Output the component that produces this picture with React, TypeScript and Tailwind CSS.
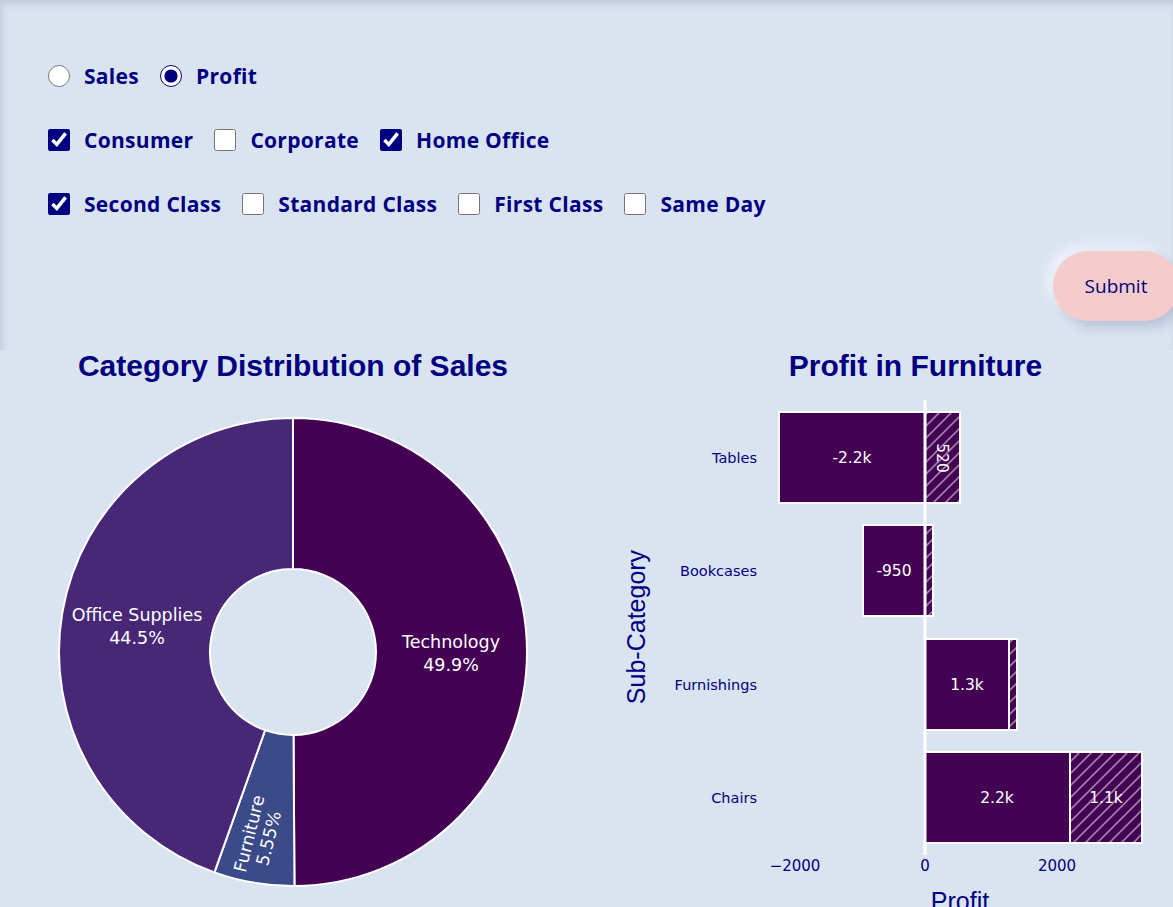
import React from 'react';

const NAVY = '#000080';

type Opt = { label: string; checked: boolean };

const segments: Opt[] = [
  { label: 'Consumer', checked: true },
  { label: 'Corporate', checked: false },
  { label: 'Home Office', checked: true },
];

const shipModes: Opt[] = [
  { label: 'Second Class', checked: true },
  { label: 'Standard Class', checked: false },
  { label: 'First Class', checked: false },
  { label: 'Same Day', checked: false },
];

function CheckRow({ items }: { items: Opt[] }) {
  return (
    <div className="flex items-center gap-[21px]">
      {items.map((it) => (
        <label key={it.label} className="flex items-center gap-[14px]">
          <input type="checkbox" defaultChecked={it.checked} className="m-0 w-[22px] h-[22px] accent-[#000080]" />
          <span>{it.label}</span>
        </label>
      ))}
    </div>
  );
}

// pie helpers: angle measured clockwise from 12 o'clock, in degrees
const pt = (cx: number, cy: number, r: number, a: number) => {
  const rad = (a * Math.PI) / 180;
  return [cx + r * Math.sin(rad), cy - r * Math.cos(rad)];
};

function slice(cx: number, cy: number, ro: number, ri: number, a0: number, a1: number) {
  const large = a1 - a0 > 180 ? 1 : 0;
  const [x0, y0] = pt(cx, cy, ro, a0);
  const [x1, y1] = pt(cx, cy, ro, a1);
  const [x2, y2] = pt(cx, cy, ri, a1);
  const [x3, y3] = pt(cx, cy, ri, a0);
  return `M${x0},${y0} A${ro},${ro} 0 ${large} 1 ${x1},${y1} L${x2},${y2} A${ri},${ri} 0 ${large} 0 ${x3},${y3} Z`;
}

function PieChart() {
  const cx = 293;
  const cy = 270;
  const tech = 0.499 * 360;
  const furn = tech + 0.0555 * 360;
  return (
    <svg width="586" height="525" className="block" style={{ fontFamily: '"DejaVu Sans", Verdana, sans-serif' }}>
      <path d={slice(cx, cy, 234, 83, 0, tech)} fill="#440154" stroke="#fff" strokeWidth="2" />
      <path d={slice(cx, cy, 234, 83, tech, furn)} fill="#3b4a88" stroke="#fff" strokeWidth="2" />
      <path d={slice(cx, cy, 234, 83, furn, 360)} fill="#482777" stroke="#fff" strokeWidth="2" />
      <g fill="#fff" fontSize="17.5" textAnchor="middle">
        <text x="137" y="239">Office Supplies</text>
        <text x="137" y="262">44.5%</text>
        <text x="451" y="266">Technology</text>
        <text x="451" y="289">49.9%</text>
        <g transform="translate(259 454) rotate(-76)">
          <text x="0" y="-4">Furniture</text>
          <text x="0" y="16">5.55%</text>
        </g>
      </g>
    </svg>
  );
}

const bars = [
  { name: 'Tables', y: 30, x0: 193, x1: 339, h1: 374, label: '-2.2k', lx: 266 },
  { name: 'Bookcases', y: 143, x0: 277, x1: 339, h1: 347, label: '-950', lx: 308 },
  { name: 'Furnishings', y: 257, x0: 339, x1: 423, h1: 431, label: '1.3k', lx: 381 },
  { name: 'Chairs', y: 370, x0: 339, x1: 484, h1: 556, label: '2.2k', lx: 411 },
];

function BarChart() {
  return (
    <svg width="587" height="525" className="block overflow-visible" style={{ fontFamily: '"DejaVu Sans", Verdana, sans-serif' }}>
      <defs>
        <pattern id="hatch" patternUnits="userSpaceOnUse" width="12" height="12">
          <rect width="12" height="12" fill="#440154" />
          <path d="M0,12 L12,0 M-3,3 L3,-3 M9,15 L15,9" stroke="rgba(255,255,255,0.5)" strokeWidth="1.6" />
        </pattern>
      </defs>
      {bars.map((b) => {
        const neg = b.x0 < 339;
        const hx = neg ? 339 : b.x1;
        return (
          <g key={b.name}>
            <rect x={b.x0} y={b.y} width={b.x1 - b.x0} height="91" fill="#440154" stroke="#fff" strokeWidth="2" />
            <rect x={hx} y={b.y} width={b.h1 - hx} height="91" fill="url(#hatch)" stroke="#fff" strokeWidth="2" />
            <text x={b.lx} y={b.y + 51} fill="#fff" fontSize="15.5" textAnchor="middle">{b.label}</text>
            <text x="171" y={b.y + 51} fill={NAVY} fontSize="14.5" textAnchor="end">{b.name}</text>
          </g>
        );
      })}
      <text transform="translate(351 76) rotate(90)" fill="#fff" fontSize="15.5" textAnchor="middle">520</text>
      <text x="520" y="421" fill="#fff" fontSize="15.5" textAnchor="middle">1.1k</text>
      <line x1="339" y1="18" x2="339" y2="473" stroke="#fff" strokeWidth="3" />
      <g fill={NAVY} fontSize="15" textAnchor="middle">
        <text x="209" y="489">−2000</text>
        <text x="339" y="489">0</text>
        <text x="471" y="489">2000</text>
      </g>
      <g fill={NAVY} fontSize="25" textAnchor="middle" style={{ fontFamily: '"Liberation Sans", Arial, sans-serif' }}>
        <text transform="translate(59 245) rotate(-90)">Sub-Category</text>
        <text x="374" y="528">Profit</text>
      </g>
    </svg>
  );
}

export default function App() {
  return (
    <div className="w-[1173px] h-[907px] overflow-hidden bg-[#dae3f0] text-[#000080]">
      <section className="relative h-[350px] pt-[64px] pl-[48px] shadow-[inset_2px_4px_6px_rgba(120,130,150,0.25)] font-['Open_Sans','Nunito',sans-serif] font-bold text-[21px] leading-[24px] tracking-[0.3px]">
        <div className="flex flex-col gap-[40px]">
          <div className="flex items-center gap-[21px]">
            <label className="flex items-center gap-[14px]">
              <input type="radio" name="metric" className="m-0 w-[22px] h-[22px] accent-[#000080]" />
              <span>Sales</span>
            </label>
            <label className="flex items-center gap-[14px]">
              <input type="radio" name="metric" defaultChecked className="m-0 w-[22px] h-[22px] accent-[#000080]" />
              <span>Profit</span>
            </label>
          </div>
          <CheckRow items={segments} />
          <CheckRow items={shipModes} />
        </div>
        <div className="flex justify-end mt-[35px] -mr-[6px]">
          <button className="w-[126px] h-[70px] rounded-full bg-[#f5cccc] font-normal tracking-normal text-[19px] shadow-[6px_6px_12px_#b7c2d8,-6px_-6px_12px_#eef3fb]">
            Submit
          </button>
        </div>
      </section>
      <section className="grid grid-cols-[586px_587px] font-['Liberation_Sans',Arial,sans-serif]">
        <div>
          <h2 className="h-[32px] text-center text-[30px] leading-[32px] font-bold">Category Distribution of Sales</h2>
          <PieChart />
        </div>
        <div>
          <h2 className="h-[32px] pl-[72px] text-center text-[30px] leading-[32px] font-bold">Profit in Furniture</h2>
          <BarChart />
        </div>
      </section>
    </div>
  );
}
